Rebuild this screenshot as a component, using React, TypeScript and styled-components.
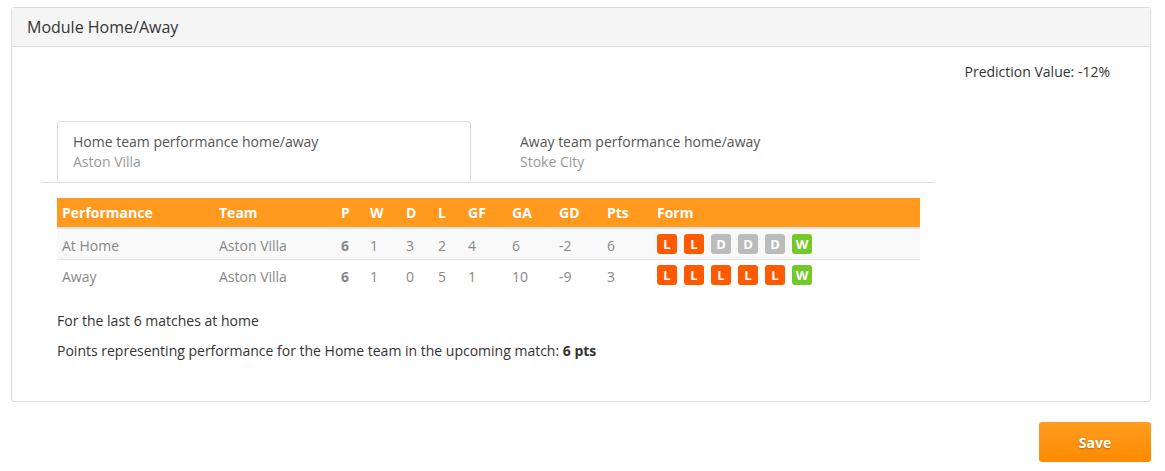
import React from "react";
import styled, { createGlobalStyle } from "styled-components";

const Global = createGlobalStyle`
  html, body { margin: 0; padding: 0; background: #fff; }
  body { font-family: "Open Sans", "Noto Sans", sans-serif; color: #333; }
  * { box-sizing: border-box; }
`;

const Page = styled.div`
  padding: 7px 14px 0 11px;
  width: 1165px;
`;

const Panel = styled.section`
  border: 1px solid #dcdcdc;
  border-radius: 3px;
  height: 395px;
  display: flex;
  flex-direction: column;
`;

const PanelHeader = styled.header`
  background: #f5f5f5;
  border-bottom: 1px solid #dcdcdc;
  height: 39px;
  padding: 0 15px;
  display: flex;
  align-items: center;
  font-size: 16px;
  color: #333;
`;

const PanelBody = styled.div`
  padding: 16px 40px 0 29px;
`;

const Prediction = styled.div`
  text-align: right;
  font-size: 14px;
  color: #333;
  line-height: 18px;
`;

const TabBar = styled.div`
  margin-top: 40px;
  width: 894px;
  display: flex;
  padding-left: 16px;
  border-bottom: 1px solid #dcdcdc;
`;

const Tab = styled.div<{ $active?: boolean; $pad: number }>`
  width: 414px;
  height: 61px;
  padding: 10px 0 0 ${(p) => p.$pad}px;
  margin-bottom: ${(p) => (p.$active ? "-1px" : "0")};
  border: 1px solid ${(p) => (p.$active ? "#dcdcdc" : "transparent")};
  border-bottom-color: ${(p) => (p.$active ? "#fff" : "transparent")};
  border-radius: 3px 3px 0 0;
  background: ${(p) => (p.$active ? "#fff" : "transparent")};
`;

const TabTitle = styled.div`
  font-size: 14px;
  line-height: 20px;
  color: #555;
`;

const TabSub = styled.div`
  font-size: 14px;
  line-height: 20px;
  color: #999;
`;

const TableWrap = styled.div`
  margin: 15px 0 0 16px;
  width: 863px;
`;

const Table = styled.table`
  width: 100%;
  border-collapse: collapse;
  font-size: 14px;
`;

const Th = styled.th`
  background: #ff9a1f;
  color: #fff;
  font-weight: 700;
  text-align: left;
  height: 30px;
  padding: 0 5px;
  border-bottom: 2px solid #e2e2e2;
`;

const Tr = styled.tr<{ $shade?: boolean }>`
  background: ${(p) => (p.$shade ? "#f9f9f9" : "#fff")};
  border-bottom: 1px solid #e2e2e2;
  &:last-child { border-bottom: none; }
`;

const Td = styled.td<{ $bold?: boolean; $form?: boolean }>`
  height: 31px;
  padding: ${(p) => (p.$form ? "1px 5px 0" : "3px 5px 0")};
  color: #888;
  font-weight: ${(p) => (p.$bold ? 700 : 400)};
`;

const FormRow = styled.div`
  display: flex;
  gap: 7px;
`;

const Badge = styled.span<{ $kind: "L" | "D" | "W" }>`
  width: 20px;
  height: 20px;
  border-radius: 3px;
  display: inline-flex;
  align-items: center;
  justify-content: center;
  font-size: 13px;
  font-weight: 700;
  color: #fff;
  background: ${(p) => (p.$kind === "L" ? "#ff5a00" : p.$kind === "D" ? "#bbbbbb" : "#74c92a")};
`;

const Note = styled.p`
  margin: 0;
  font-size: 14px;
  line-height: 20px;
  color: #333;
`;

const Notes = styled.div`
  margin: 21px 0 0 16px;
  display: flex;
  flex-direction: column;
  gap: 10px;
`;

const Footer = styled.div`
  display: flex;
  justify-content: flex-end;
  margin-top: 20px;
`;

const SaveButton = styled.button`
  width: 112px;
  height: 40px;
  border: none;
  border-radius: 3px;
  background: linear-gradient(#ff9d22, #ff8a00);
  color: #fff;
  font-family: "Open Sans", sans-serif;
  font-weight: 700;
  font-size: 14px;
  text-shadow: 0 1px 2px rgba(0, 0, 0, 0.3);
  cursor: pointer;
`;

const cols = [157, 122, 29, 36, 32, 30, 44, 47, 48, 50];
const headers = ["Performance", "Team", "P", "W", "D", "L", "GF", "GA", "GD", "Pts", "Form"];

type Row = {
  perf: string;
  team: string;
  vals: (string | number)[];
  form: ("L" | "D" | "W")[];
};

const rows: Row[] = [
  { perf: "At Home", team: "Aston Villa", vals: [6, 1, 3, 2, 4, 6, -2, 6], form: ["L", "L", "D", "D", "D", "W"] },
  { perf: "Away", team: "Aston Villa", vals: [6, 1, 0, 5, 1, 10, -9, 3], form: ["L", "L", "L", "L", "L", "W"] },
];

export default function App() {
  return (
    <>
      <Global />
      <Page>
        <Panel>
          <PanelHeader>Module Home/Away</PanelHeader>
          <PanelBody>
            <Prediction>Prediction Value: -12%</Prediction>
            <TabBar>
              <Tab $active $pad={15}>
                <TabTitle>Home team performance home/away</TabTitle>
                <TabSub>Aston Villa</TabSub>
              </Tab>
              <Tab $pad={48}>
                <TabTitle>Away team performance home/away</TabTitle>
                <TabSub>Stoke City</TabSub>
              </Tab>
            </TabBar>
            <TableWrap>
              <Table>
                <colgroup>
                  {cols.map((w, i) => (
                    <col key={i} style={{ width: w }} />
                  ))}
                  <col />
                </colgroup>
                <thead>
                  <tr>
                    {headers.map((h) => (
                      <Th key={h}>{h}</Th>
                    ))}
                  </tr>
                </thead>
                <tbody>
                  {rows.map((r, i) => (
                    <Tr key={r.perf} $shade={i === 0}>
                      <Td>{r.perf}</Td>
                      <Td>{r.team}</Td>
                      {r.vals.map((v, j) => (
                        <Td key={j} $bold={j === 0}>
                          {v}
                        </Td>
                      ))}
                      <Td $form>
                        <FormRow>
                          {r.form.map((f, k) => (
                            <Badge key={k} $kind={f}>
                              {f}
                            </Badge>
                          ))}
                        </FormRow>
                      </Td>
                    </Tr>
                  ))}
                </tbody>
              </Table>
            </TableWrap>
            <Notes>
              <Note>For the last 6 matches at home</Note>
              <Note>
                Points representing performance for the Home team in the upcoming match: <b>6 pts</b>
              </Note>
            </Notes>
          </PanelBody>
        </Panel>
        <Footer>
          <SaveButton>Save</SaveButton>
        </Footer>
      </Page>
    </>
  );
}
